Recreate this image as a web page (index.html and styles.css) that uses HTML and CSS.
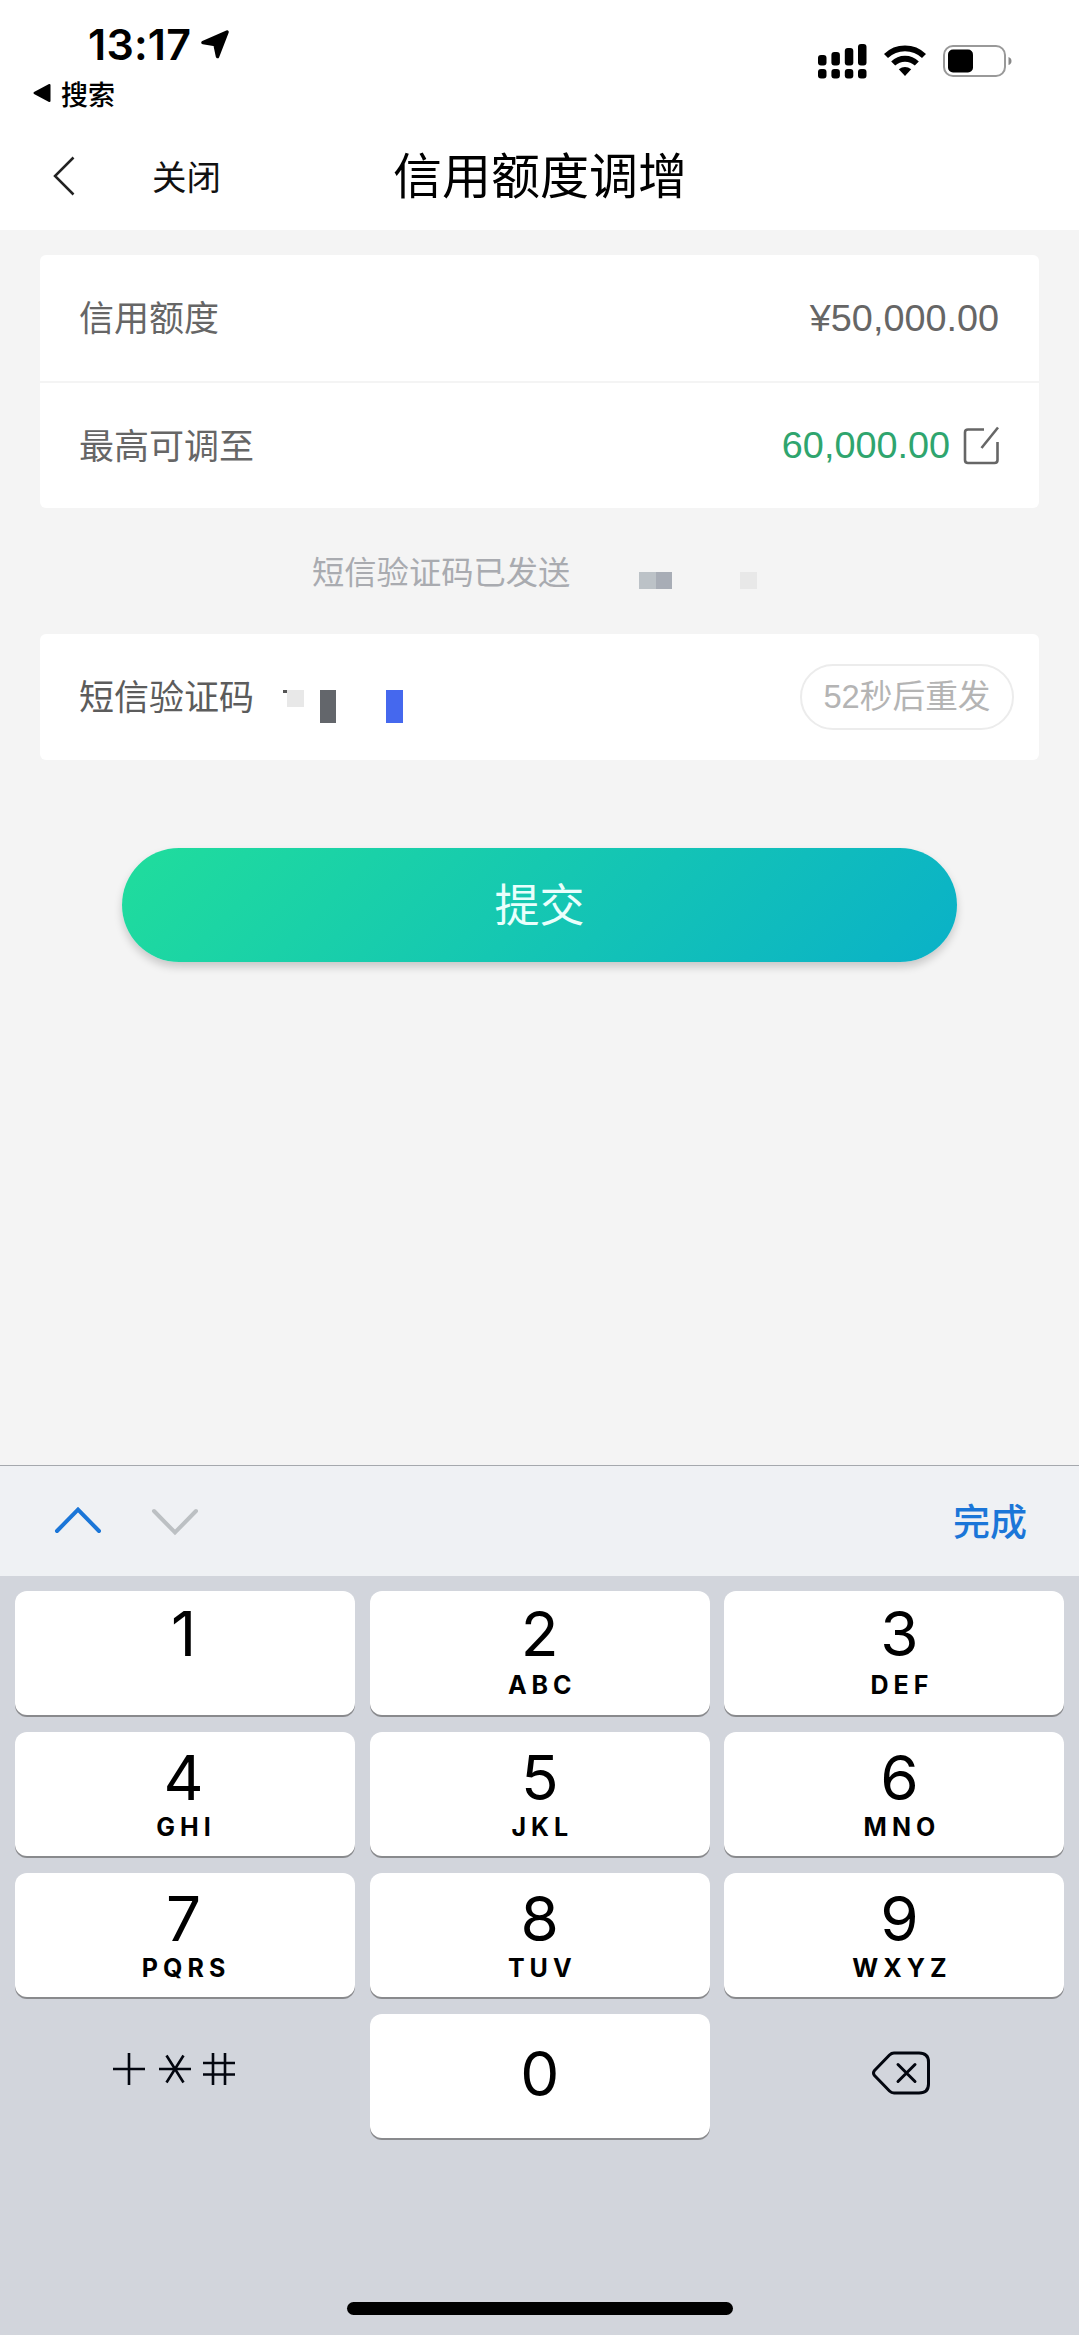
FILE: index.html
```html
<!DOCTYPE html>
<html lang="zh-CN">
<head>
    <meta charset="UTF-8">
    <title>信用额度调增</title>
    <link rel="stylesheet" href="styles.css">
</head>
<body>

    <div class="status-bar">
        <div class="status-left">
            <div class="clock">
                <span class="time">13:17</span>
                <svg class="location" width="28" height="29" viewBox="0 0 28 29">
                    <path d="M26 2 L16.500 26.500 L14 14.500 L2 12.500 Z" fill="#000" stroke="#000" stroke-width="3.500" stroke-linejoin="round"/>
                </svg>
            </div>
            <div class="back-app">
                <svg width="18" height="20" viewBox="0 0 18 20"><path d="M1.500 10 L16.500 2 V18 Z" fill="#000" stroke="#000" stroke-width="2" stroke-linejoin="round"/></svg>
                <span>搜索</span>
            </div>
        </div>
        <div class="status-right">
            <svg width="50" height="36" viewBox="0 0 50 36">
                <rect x="1" y="11" width="8.500" height="10.500" rx="3"/>
                <rect x="14.400" y="8" width="8.500" height="13.500" rx="3"/>
                <rect x="27.800" y="4" width="8.500" height="17.500" rx="3"/>
                <rect x="41" y="0" width="8.500" height="21.500" rx="3"/>
                <rect x="1" y="25" width="8.500" height="9.500" rx="3"/>
                <rect x="14.400" y="25" width="8.500" height="9.500" rx="3"/>
                <rect x="27.800" y="25" width="8.500" height="9.500" rx="3"/>
                <rect x="41" y="25" width="8.500" height="9.500" rx="3"/>
            </svg>
            <svg width="42" height="36" viewBox="0 0 42 36">
                <path d="M2 12 A27.500 27.500 0 0 1 40 12" fill="none" stroke="#000" stroke-width="5.800"/>
                <path d="M9.200 19.500 A17 17 0 0 1 32.800 19.500" fill="none" stroke="#000" stroke-width="5.800"/>
                <path d="M14.800 25.300 Q21 20.800 27.200 25.300 L21 32 Z"/>
            </svg>
            <svg width="70" height="36" viewBox="0 0 70 36">
                <rect x="1" y="2" width="61" height="30" rx="9" fill="none" stroke="#999" stroke-width="2"/>
                <rect x="5" y="5.500" width="25" height="23" rx="5"/>
                <path d="M65.500 13 Q68.500 14 68.500 17 Q68.500 20 65.500 21 Z" fill="#888"/>
            </svg>
        </div>
    </div>

    <div class="nav">
        <svg class="back" width="24" height="42" viewBox="0 0 24 42"><path d="M21.500 2.500 L3 21 L21.500 39.500" fill="none" stroke="#222" stroke-width="2.500"/></svg>
        <span class="close">关闭</span>
        <h1>信用额度调增</h1>
    </div>

    <main class="content">
        <div class="card">
            <div class="row">
                <span class="label">信用额度</span>
                <span class="amount">¥50,000.00</span>
            </div>
            <div class="row">
                <span class="label">最高可调至</span>
                <span class="amount editable">60,000.00
                    <svg width="36" height="40" viewBox="0 0 36 40" fill="none" stroke="#666" stroke-width="2.600">
                        <path d="M21 3.500 H5 Q2 3.500 2 6.500 V34 Q2 37 5 37 H31.500 Q34.500 37 34.500 34 V16"/>
                        <path d="M35 1.500 L18.500 22"/>
                    </svg>
                </span>
            </div>
        </div>

        <div class="hint">
            <span>短信验证码已发送</span>
            <i class="px px-a"></i><i class="px px-b"></i><i class="px px-c"></i>
        </div>

        <div class="card">
            <div class="row code">
                <span class="label">短信验证码</span>
                <div class="code-value">
                    <i class="tick"></i><i class="px px-c"></i><i class="px px-dark"></i><i class="px px-blue"></i>
                </div>
                <span class="resend">52秒后重发</span>
            </div>
        </div>

        <button class="submit">提交</button>
    </main>

    <div class="toolbar">
        <svg width="50" height="30" viewBox="0 0 50 30"><path d="M4 26 L25 4.500 L46 26" fill="none" stroke="#1b76d8" stroke-width="4" stroke-linecap="round"/></svg>
        <svg class="down" width="50" height="30" viewBox="0 0 50 30"><path d="M4 4 L25 25.500 L46 4" fill="none" stroke="#bcc0c3" stroke-width="4" stroke-linecap="round"/></svg>
        <span class="done">完成</span>
    </div>

    <div class="keyboard">
        <div class="keys">
            <div class="key first">1</div>
            <div class="key first">2<small>ABC</small></div>
            <div class="key first">3<small>DEF</small></div>
            <div class="key">4<small>GHI</small></div>
            <div class="key">5<small>JKL</small></div>
            <div class="key">6<small>MNO</small></div>
            <div class="key">7<small>PQRS</small></div>
            <div class="key">8<small>TUV</small></div>
            <div class="key">9<small>WXYZ</small></div>
            <div class="key plain symbols">
                <svg width="124" height="34" viewBox="0 0 124 34" fill="none" stroke="#03060f" stroke-width="2.600">
                    <path d="M1 17 H33 M17 1 V33"/>
                    <path d="M47 17 H79 M54.500 3.500 L71.500 30.500 M71.500 3.500 L54.500 30.500"/>
                    <path d="M91 11 H123 M91 22.500 H123 M101 1 V33 M113 1 V33"/>
                </svg>
            </div>
            <div class="key zero">0</div>
            <div class="key plain delete">
                <svg width="60" height="44" viewBox="0 0 60 44" fill="none" stroke="#03060f" stroke-width="3" stroke-linecap="round" stroke-linejoin="round">
                    <path d="M23 2 H48 Q57.500 2 57.500 11 V33 Q57.500 42 48 42 H23 Q20.500 42 18.500 40 L3.500 24.500 Q1.500 22 3.500 19.500 L18.500 4 Q20.500 2 23 2 Z"/>
                    <path d="M27 13.500 L44 30.500 M44 13.500 L27 30.500"/>
                </svg>
            </div>
        </div>
        <div class="home-bar"></div>
    </div>

</body>
</html>
```

FILE: styles.css
```css
* {
    box-sizing: border-box;
}
body {
    margin: 0;
    height: 2335px;
    display: flex;
    flex-direction: column;
    background-color: #f4f4f4;
    font-family: "Liberation Sans", "Noto Sans CJK SC", sans-serif;
    color: #666;
}
svg {
    display: block;
    flex-shrink: 0;
}

/* status bar */
.status-bar {
    height: 120px;
    background-color: #fff;
    display: flex;
    justify-content: space-between;
    color: #000;
}
.status-left {
    padding: 19px 0 0 33px;
}
.clock {
    display: flex;
    align-items: center;
    height: 50px;
    padding-left: 55px;
}
.time {
    width: 113px;
    font-family: Inter, sans-serif;
    font-size: 43px;
    font-weight: 600;
    letter-spacing: 0.2px;
}
.back-app {
    display: flex;
    align-items: center;
    gap: 10px;
    height: 48px;
    font-size: 27px;
    font-weight: 500;
}
.status-right {
    display: flex;
    gap: 17px;
    padding: 44px 66px 0 0;
}

/* title bar */
.nav {
    height: 110px;
    display: flex;
    align-items: center;
    padding: 2px 0 0 52px;
    background-color: #fff;
    color: #111;
}
.nav .close {
    width: 240px;
    padding: 3px 0 0 76px;
    font-size: 34.5px;
    line-height: 100px;
}
.nav h1 {
    margin: 0 0 0 77px;
    padding-top: 2px;
    font-size: 49px;
    font-weight: 400;
    line-height: 100px;
    color: #000;
}

/* form */
.content {
    height: 1235px;
    padding: 25px 40px 0;
}
.card {
    background-color: #fff;
    border-radius: 6px;
}
.row {
    height: 126px;
    display: flex;
    align-items: center;
    padding: 0 40px 0 39px;
    font-size: 35px;
}
.row + .row {
    height: 127px;
    border-top: 2px solid #f4f4f4;
}
.label {
    padding-bottom: 5px;
}
.amount {
    margin-left: auto;
    font-size: 37.8px;
}
.editable {
    display: flex;
    align-items: center;
    gap: 13px;
    color: #2fa56e;
}
.hint {
    display: flex;
    align-items: center;
    height: 126px;
    padding-left: 272px;
    font-size: 32.3px;
    color: #a9abb0;
}
.hint span {
    width: 327px;
    padding-bottom: 3px;
}
.hint .px {
    margin-top: 18px;
}
.px {
    width: 16.5px;
    height: 17px;
    flex-shrink: 0;
}
.px-a {
    background-color: #bcc2c7;
}
.px-b {
    background-color: #a8adb6;
}
.px-c {
    background-color: #e8e8e8;
}
.px-b + .px-c {
    margin-left: 68px;
}
.code {
    padding-right: 25px;
    color: #5c5c5c;
}
.code-value {
    display: flex;
    align-items: flex-start;
    height: 33px;
    margin: 19px 0 0 29px;
}
.tick {
    width: 4px;
    height: 3px;
    background-color: #555;
}
.px-dark {
    height: 33px;
    margin-left: 16px;
    background-color: #63666b;
}
.px-blue {
    height: 33px;
    margin-left: 50px;
    background-color: #4568ee;
}
.resend {
    width: 214px;
    height: 66px;
    margin-left: auto;
    border: 2px solid #ececec;
    border-radius: 33px;
    font-size: 32.7px;
    line-height: 62px;
    text-align: center;
    color: #b4b4b4;
}
.submit {
    display: block;
    width: 835px;
    height: 114px;
    margin: 88px 0 0 82px;
    padding: 0 0 5px;
    border: none;
    border-radius: 57px;
    background: linear-gradient(135deg, #20dd9c, #0ab1c8);
    box-shadow: 0 5px 8px rgba(0,0,0,0.18);
    font-family: inherit;
    font-size: 45px;
    color: #e9fffc;
}

/* keyboard */
.toolbar {
    height: 111px;
    display: flex;
    align-items: center;
    padding: 0 52px 2px 53px;
    border-top: 1px solid #a5a8ad;
    background-color: #eff1f4;
}
.toolbar .down {
    margin: 4px 0 0 47px;
}
.done {
    margin-left: auto;
    font-size: 37px;
    font-weight: 500;
    color: #1b76d8;
}
.keyboard {
    flex: 1;
    padding: 15px 14.5px 0 15px;
    background-color: #d2d5dc;
}
.keys {
    display: grid;
    grid-template-columns: repeat(3, 1fr);
    grid-auto-rows: 124px;
    gap: 17px 14.5px;
    height: 711px;
    align-content: start;
}
.key {
    display: flex;
    flex-direction: column;
    align-items: center;
    padding-top: 16px;
    border-radius: 12px;
    background-color: #fff;
    box-shadow: 0 2px 0 #898a8d;
    font-family: Inter, sans-serif;
    font-size: 62px;
    line-height: 60px;
    color: #000;
}
.key.first {
    padding-top: 13px;
}
.key:nth-child(3n+1) {
    padding-right: 3px;
}
.key:nth-child(3n) {
    padding-left: 10px;
}
.key small {
    margin-top: 4px;
    padding-left: 5px;
    font-size: 25px;
    font-weight: 700;
    line-height: 30px;
    letter-spacing: 5px;
}
.first small {
    margin-top: 6px;
}
.key.zero {
    padding-top: 30px;
}
.key.plain {
    background: none;
    box-shadow: none;
    padding-top: 38px;
}
.key.symbols {
    padding-right: 22px;
}
.key.delete {
    padding: 37px 0 0 14px;
}
.home-bar {
    width: 386px;
    height: 13px;
    margin-left: 332px;
    border-radius: 7px;
    background-color: #000;
}
```
